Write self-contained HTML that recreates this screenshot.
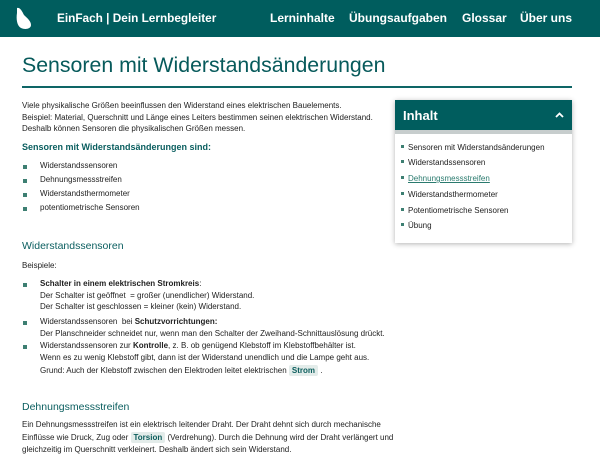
<!DOCTYPE html>
<html><head><meta charset="utf-8"><style>
*{margin:0;padding:0;box-sizing:border-box}
body{width:600px;height:459px;overflow:hidden;background:#fff;font-family:"Liberation Sans",sans-serif;color:#222;position:relative}
.hdr{position:absolute;left:0;top:0;width:600px;height:37px;background:#005d5e;color:#fff;font-size:12px;font-weight:bold}
.hdr span{position:absolute;top:11px}
.a{position:absolute;white-space:nowrap;font-size:8px;line-height:11.7px}
h1{position:absolute;left:22px;top:53px;font-size:21.3px;font-weight:normal;color:#075a5b;white-space:nowrap}
.rule{position:absolute;left:22px;top:86px;width:550px;height:2px;background:#0e6566}
.h2{position:absolute;font-size:10.5px;color:#0a5e5f;white-space:nowrap}
.b{position:absolute;width:4px;height:4px;background:#3d7f72}
.chip{background:#e3ecea;color:#0b5d5c;font-weight:bold;padding:1px 3px;border-radius:2px}
.side{position:absolute;left:395px;top:100px;width:177px;height:143px;box-shadow:0 1px 5px rgba(0,0,0,.3);background:#fff}
.sh{height:30px;background:#005d5e;color:#fff;font-size:13px;font-weight:bold;padding:8px 8px;border-bottom:4px solid #c7cdcd;height:34px}
.si{position:absolute;left:6px;font-size:8px;white-space:nowrap}
.si:before{content:"";display:inline-block;width:3px;height:3px;background:#3d7f72;margin-right:4px;vertical-align:2px}
</style></head><body>
<div class="hdr">
<svg style="position:absolute;left:15px;top:7px" width="18" height="23" viewBox="0 0 18 23"><path d="M2 1 C5 0 7 4 9 8 C12 11 16 14 16 18 C16 22 10 23 6 21 C2 19 1 12 2 6 Z" fill="#fff"/></svg>
<span style="left:57px;font-size:11.8px">EinFach | Dein Lernbegleiter</span>
<span style="left:270px">Lerninhalte</span>
<span style="left:349px">Übungsaufgaben</span>
<span style="left:462px">Glossar</span>
<span style="left:520px">Über uns</span>
</div>
<h1>Sensoren mit Widerstandsänderungen</h1>
<div class="rule"></div>
<div class="a" style="left:22px;top:100px">Viele physikalische Größen beeinflussen den Widerstand eines elektrischen Bauelements.<br>Beispiel: Material, Querschnitt und Länge eines Leiters bestimmen seinen elektrischen Widerstand.<br>Deshalb können Sensoren die physikalischen Größen messen.</div>
<div class="h2" style="left:22px;top:142px;font-size:9px;font-weight:bold">Sensoren mit Widerstandsänderungen sind:</div>
<div class="b" style="left:23px;top:165px"></div><div class="a" style="left:40px;top:160px">Widerstandssensoren</div>
<div class="b" style="left:23px;top:179px"></div><div class="a" style="left:40px;top:174px">Dehnungsmessstreifen</div>
<div class="b" style="left:23px;top:193px"></div><div class="a" style="left:40px;top:188px">Widerstandsthermometer</div>
<div class="b" style="left:23px;top:207px"></div><div class="a" style="left:40px;top:202px">potentiometrische Sensoren</div>
<div class="h2" style="left:22px;top:240px">Widerstandssensoren</div>
<div class="a" style="left:22px;top:260px">Beispiele:</div>
<div class="b" style="left:23px;top:283px"></div><div class="a" style="left:40px;top:278px"><b>Schalter in einem elektrischen Stromkreis</b>:<br>Der Schalter ist geöffnet &nbsp;= großer (unendlicher) Widerstand.<br>Der Schalter ist geschlossen = kleiner (kein) Widerstand.</div>
<div class="b" style="left:23px;top:321px"></div><div class="a" style="left:40px;top:316px">Widerstandssensoren &nbsp;bei <b>Schutzvorrichtungen:</b><br>Der Planschneider schneidet nur, wenn man den Schalter der Zweihand-Schnittauslösung drückt.</div>
<div class="b" style="left:23px;top:345px"></div><div class="a" style="left:40px;top:340px;line-height:12.3px">Widerstandssensoren zur <b>Kontrolle</b>, z. B. ob genügend Klebstoff im Klebstoffbehälter ist.<br>Wenn es zu wenig Klebstoff gibt, dann ist der Widerstand unendlich und die Lampe geht aus.<br>Grund: Auch der Klebstoff zwischen den Elektroden leitet elektrischen <span class="chip">Strom</span> .</div>
<div class="h2" style="left:22px;top:401px">Dehnungsmessstreifen</div>
<div class="a" style="left:22px;top:419px;line-height:12.5px">Ein Dehnungsmessstreifen ist ein elektrisch leitender Draht. Der Draht dehnt sich durch mechanische<br>Einflüsse wie Druck, Zug oder <span class="chip">Torsion</span> (Verdrehung). Durch die Dehnung wird der Draht verlängert und<br>gleichzeitig im Querschnitt verkleinert. Deshalb ändert sich sein Widerstand.</div>
<div class="side">
<div class="sh">Inhalt<svg style="position:absolute;right:8px;top:12px" width="9" height="6" viewBox="0 0 9 6"><path d="M1 5 L4.5 1.5 L8 5" stroke="#fff" stroke-width="1.8" fill="none"/></svg></div>
<div class="si" style="top:43px">Sensoren mit Widerstandsänderungen</div>
<div class="si" style="top:58px">Widerstandssensoren</div>
<div class="si" style="top:74px;color:#2a7a6e;text-decoration:underline">Dehnungsmessstreifen</div>
<div class="si" style="top:90px">Widerstandsthermometer</div>
<div class="si" style="top:106px">Potentiometrische Sensoren</div>
<div class="si" style="top:121px">Übung</div>
</div>
</body></html>
